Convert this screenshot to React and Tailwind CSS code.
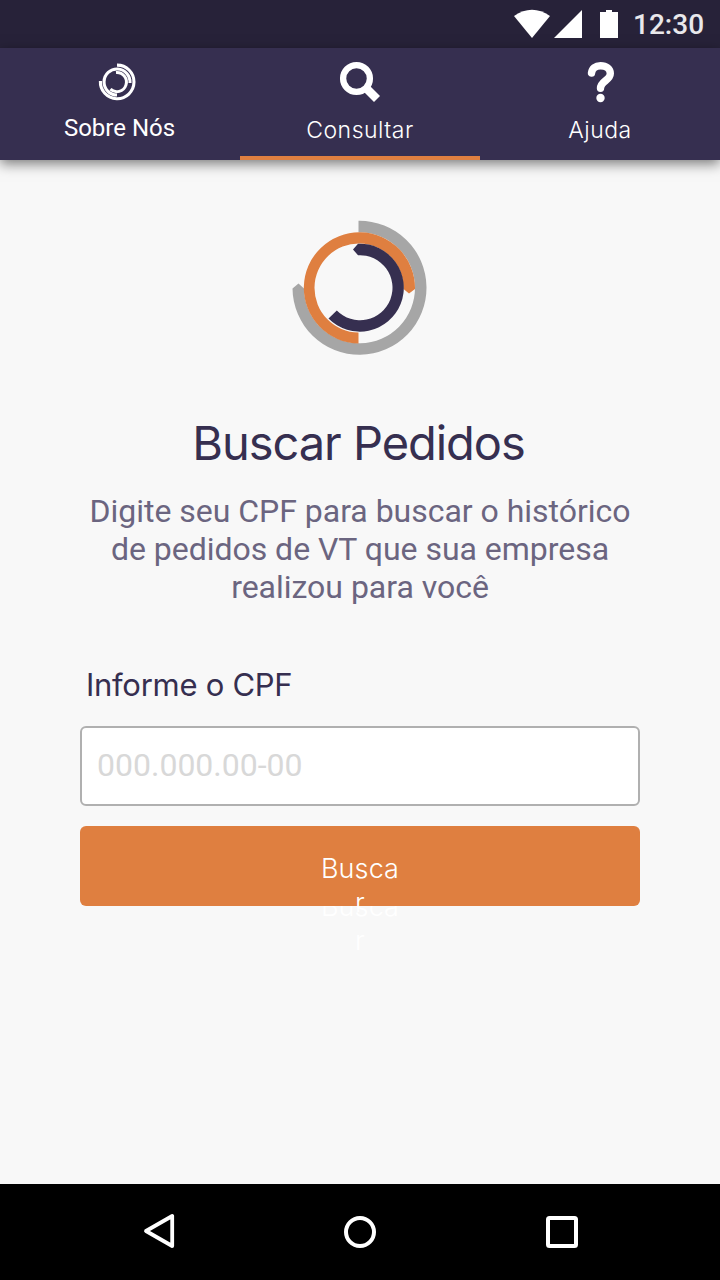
import React from "react";

function StatusBar() {
  return (
    <div className="flex h-12 shrink-0 items-center bg-[#272239] pl-[514px]">
      <svg className="h-12 w-[104px] shrink-0" viewBox="514 0 104 48" fill="#fff">
        <path d="M514 16Q532 3.500 550 16L532 38Z" />
        <path d="M582 10V38H554Z" />
        <path d="M600 12H606V10H612V12H618V38H600Z" />
      </svg>
      <span className="ml-[15px] pt-[2px] font-['Roboto',sans-serif] text-[28px] leading-[48px] font-medium whitespace-nowrap text-[#e9e8eb]">12:30</span>
    </div>
  );
}

function MiniLogo() {
  return (
    <svg className="h-10 w-10" viewBox="97 62 40 40" fill="none" stroke="#fff">
      <path d="M117 65.100A16.800 16.800 0 1 1 100.400 81" strokeWidth="3.100" />
      <path d="M117 95A13 13 0 1 1 130 83" strokeWidth="3.100" />
      <path d="M116 72.500A9.600 9.600 0 1 1 110.400 89.200" strokeWidth="3" />
    </svg>
  );
}

function Header() {
  return (
    <nav className="relative z-10 grid h-28 shrink-0 grid-cols-3 bg-[#362f50] text-white shadow-[0_4px_12px_0_rgba(0,0,0,0.5)]">
      <div className="flex flex-col items-center pt-[14px]">
        <div className="mr-[6px] h-10"><MiniLogo /></div>
        <span className="mt-[10px] mr-px font-['Roboto',sans-serif] text-[24px] leading-8">Sobre Nós</span>
      </div>
      <div className="flex flex-col items-center border-b-4 border-[#df7f40] pt-3">
        <svg className="h-11 w-11" viewBox="338 60 44 44" fill="none" stroke="#fff">
          <circle cx="356.500" cy="78.500" r="13.400" strokeWidth="6.300" />
          <path d="M366.500 88.500L377 99" strokeWidth="8.500" />
        </svg>
        <span className="mt-[10px] font-['Inter',sans-serif] text-[23px] leading-8 font-[350] tracking-[0.5px]">Consultar</span>
      </div>
      <div className="flex flex-col items-center pt-3">
        <svg className="h-11 w-11" viewBox="578 60 44 44" fill="none" stroke="#fff">
          <path d="M591.500 73C592 68.500 595.500 65.700 600.500 65.700C606.500 65.700 610.300 69 610.300 73.500C610.300 80.500 600.500 81 600.500 88.300" strokeWidth="7.400" strokeLinecap="round" />
          <circle cx="600.500" cy="98" r="4.200" fill="#fff" stroke="none" />
        </svg>
        <span className="mt-[10px] font-['Inter',sans-serif] text-[23px] leading-8 font-[350] tracking-[0.5px]">Ajuda</span>
      </div>
    </nav>
  );
}

function Logo() {
  return (
    <svg className="mt-[56px] h-[144px] w-[144px] shrink-0" viewBox="288 216 144 144">
      <path fill="#a6a6a6" d="M358.500 220.800A67 67 0 1 1 292.500 288.500L298.500 283.500L304 288.500A55.500 55.500 0 1 0 358.500 232.300Z" />
      <path fill="#df7f40" d="M358.500 343.500A55.600 55.600 0 1 1 415 289L409 293.500L403.500 289A44.500 44.500 0 1 0 358.500 332.500Z" />
      <path fill="#362f50" d="M358 243.700A44 44 0 1 1 328.500 318.600L336.800 310.500A32.500 32.500 0 1 0 358 255.300L353 249.500Z" />
    </svg>
  );
}

function NavBar() {
  return (
    <div className="flex h-24 shrink-0 items-center justify-between bg-black px-[136px]">
      <svg className="h-12 w-12" viewBox="136 1208 48 48" fill="none" stroke="#fff" strokeWidth="3.800" strokeLinejoin="round">
        <path d="M146 1231L172.200 1216V1246Z" />
      </svg>
      <svg className="h-12 w-12" viewBox="336 1208 48 48" fill="none" stroke="#fff" strokeWidth="4">
        <circle cx="360" cy="1232" r="14" />
      </svg>
      <svg className="h-12 w-12" viewBox="536 1208 48 48" fill="none" stroke="#fff" strokeWidth="4">
        <rect x="548" y="1218" width="28" height="28" rx="1.500" />
      </svg>
    </div>
  );
}

export default function App() {
  return (
    <div className="flex h-[1280px] w-[720px] flex-col overflow-hidden bg-[#f8f8f8]">
      <StatusBar />
      <Header />
      <main className="flex flex-1 flex-col items-center">
        <Logo />
        <h1 className="mt-[54px] mr-[3px] font-['Inter',sans-serif] text-[47px] leading-[58px] font-[380] tracking-[-1.05px] whitespace-nowrap text-[#362f50]">Buscar Pedidos</h1>
        <p className="mt-5 text-center font-['Roboto',sans-serif] text-[32px] leading-[38px] tracking-[-0.02px] whitespace-nowrap text-[#6b6580]">
          Digite seu CPF para buscar o histórico<br />de pedidos de VT que sua empresa<br />realizou para você
        </p>
        <div className="mt-[58px] flex w-[560px] flex-col">
          <label htmlFor="cpf" className="pl-[6px] font-['Inter',sans-serif] text-[31px] leading-[42px] tracking-[-0.28px] whitespace-nowrap text-[#362f50]">Informe o CPF</label>
          <input id="cpf" placeholder="000.000.00-00" className="mt-5 h-20 rounded-md border-2 border-[#b0b0b0] bg-white px-[15px] pb-[2px] font-['Roboto',sans-serif] text-[32px] placeholder:text-[#d8d8d8]" />
          <div className="relative mt-5 h-20">
            <span aria-hidden="true" className="absolute top-[64px] left-[240px] w-20 text-center font-['Inter',sans-serif] text-[27px] leading-[34px] font-[350] tracking-[0.1px] text-white">Busca<br />r</span>
            <button className="relative flex h-20 w-full items-start justify-center rounded-md bg-[#df7f40] pt-[26px] font-['Inter',sans-serif] text-[27px] leading-[34px] font-[350] tracking-[0.1px] text-white">
              <span>Busca<br />r</span>
            </button>
          </div>
        </div>
      </main>
      <NavBar />
    </div>
  );
}
